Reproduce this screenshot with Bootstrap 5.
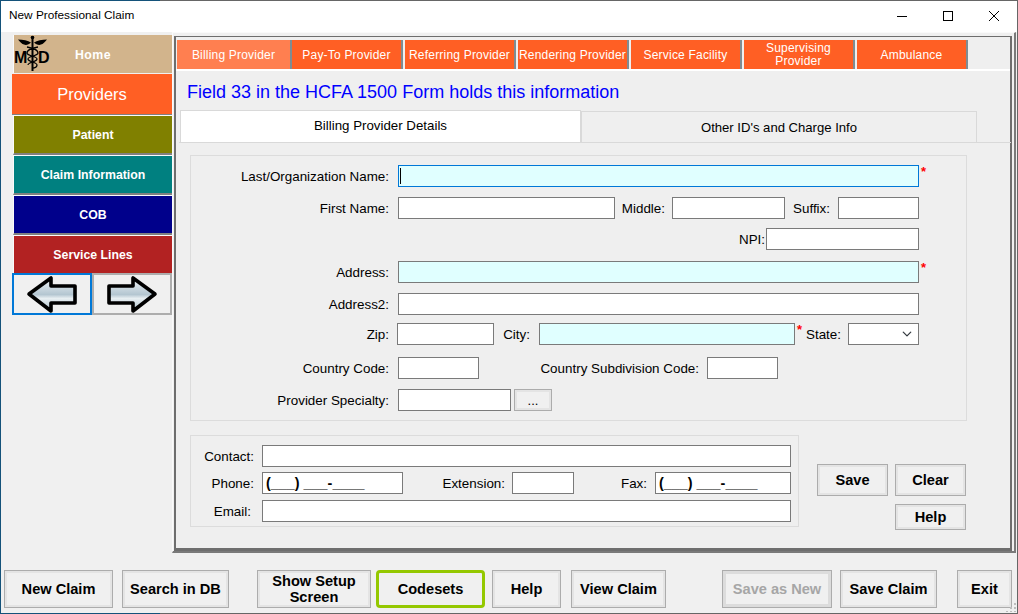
<!DOCTYPE html>
<html lang="en">
<head>
<meta charset="UTF-8">
<title>New Professional Claim</title>
<link href="https://cdn.jsdelivr.net/npm/bootstrap@5.3.0/dist/css/bootstrap.min.css" rel="stylesheet">
<style>
html, body { margin: 0; height: 100%; overflow: hidden; background: #f0f0f0; }
body { font-family: "Liberation Sans", Arial, sans-serif; font-size: 13.4px; color: #000; }
.app-window { position: relative; width: 1018px; height: 614px; border: 1px solid; border-image: linear-gradient(to right, #14527a 160px, #666 160px) 1; background: #f0f0f0; }
.title-bar { height: 31px; background: #fff; padding: 0 0 2px 8px; font-size: 11.8px; }
.win-btn { width: 46px; height: 29px; }
.main-row { height: 521px; }

/* left menu */
.side-menu { width: 171px; padding: 3px 0 0 11px; }
.side-btn { display: flex; align-items: center; justify-content: center; margin-left: 1px; padding-top: 1px; color: #fff; font-weight: 700; font-size: 12.3px; height: 40px; border-top: 1px solid #fafafa; border-bottom: 2px solid #808080; border-left: 1px solid #fafafa; }
.side-home { background: #d2b48c; height: 38px; margin-bottom: 1px; border: 0; border-left: 1px solid #fafafa; position: relative; padding-top: 2px; letter-spacing: .5px; }
.side-prov { background: #ff5f24; margin-left: 0; height: 41px; font-weight: 400; font-size: 16.5px; padding-top: 0; border: 0; border-bottom: 1px solid #808080; }
.side-patient { background: #808000; }
.side-claim { background: #008080; }
.side-cob { background: #00008b; }
.side-lines { background: #b22222; height: 38px; border-bottom: 0; }
.md-logo { position: absolute; left: 0; top: 0; }
.md-letter { font-family: "Liberation Sans", Arial, sans-serif; font-weight: 700; font-size: 16px; }
.arrow-btn { width: 80px; height: 42px; background: #f0f0f0; border: 2px solid #adadad; padding: 0; }
.arrow-on { border-color: #0078d7; }

/* right frame */
.outer-frame { width: 844px; height: 521px; padding: 3px 0 0 1px; border-right: 2px solid #7a7a7a; border-bottom: 2px solid #7a7a7a; border-top: 1px solid #fafafa; border-left: 1px solid #fafafa; }
.claim-panel { height: 515px; width: 838px; border: 2px solid #6e6e6e; border-top-width: 1px; background: #efefef; border-bottom-width: 3px; }
.top-tabs { height: 29px; margin: 3px 0 0 1px; }
.top-tab { width: 111px; margin-right: 2px; padding-top: 1px; font-size: 12px; line-height: 13px; letter-spacing: .2px; color: #fff; background: #ff5f24; border-right: 2px solid #7f8c92; text-align: center; display: flex; align-items: center; justify-content: center; }
.top-tab-on { background: #ff7f50; width: 115px; margin-right: 0; }
.strip-line { height: 2px; background: #fff; }
.form-title { color: #0000ff; font-size: 18px; line-height: 43px; height: 39px; padding-left: 11px; }
.inner-tabs { margin-left: 4px; width: 797px; height: 32px; }
.inner-tab { height: 32px; border: 1px solid #d9d9d9; border-bottom: 0; line-height: 29px; text-align: center; font-size: 13.3px; }
.inner-on { width: 401px; background: #fff; }
.inner-off { width: 396px; margin-top: 1px; height: 31px; line-height: 31px; font-size: 13.1px; }
.tab-body { border-top: 1px solid #d9d9d9; margin-left: 3px; width: 832px; }

/* form */
.group-one { margin: 12px 0 0 14px; width: 777px; height: 266px; border: 1px solid #dcdcdc; padding-top: 9px; }
.group-two { margin: 14px 0 0 14px; width: 609px; height: 92px; border: 1px solid #dcdcdc; padding-top: 9px; }
.f-row { height: 22px; display: flex; align-items: center; }
.f-row > span { padding-top: 2px; }
.gap5 { margin-top: 5px; } .gap6 { margin-top: 6px; } .gap8 { margin-top: 8px; } .gap9 { margin-top: 9px; } .gap10 { margin-top: 10px; } .gap11 { margin-top: 11px; } .gap12 { margin-top: 12px; }
.lab { width: 198px; text-align: right; white-space: nowrap; flex: none; }
.lab2 { width: 63px; text-align: right; white-space: nowrap; flex: none; }
.lab-email { padding-right: 3px; }
.to-end { text-align: right; white-space: nowrap; flex: none; }
.form-control.fld, .form-select.fld { height: 22px; min-height: 22px; border: 1px solid #7a7a7a; border-radius: 0; padding: 0 4px; background-color: #fff; box-shadow: none; font-size: 14px; font-family: inherit; flex: none; }
.form-control.req { background-color: #e0ffff; }
.form-control.caret-on { border-color: #0078d7; background-image: linear-gradient(#000, #000); background-repeat: no-repeat; background-position: 1px center; background-size: 1px 16px; }
.form-control.phone { font-weight: 700; font-size: 14.4px; padding: 0 3px; color: #000; }
.form-select.fld { width: 71px; background-position: right 4px center; background-size: 14px 10px; }
.f-row > .star { color: #f00; font-size: 13px; font-weight: 700; line-height: 10px; align-self: flex-start; margin-left: 2px; padding-top: 2px; width: 6px; flex: none; }
.w25 { width: 25px; } .w36 { width: 36px; } .w38 { width: 38px; } .w44 { width: 44px; } .w45 { width: 45px; } .w62 { width: 62px; } .w71 { width: 71px; } .w73 { width: 73px; } .w81 { width: 81px; } .w97 { width: 97px; } .w102 { width: 102px; } .w113 { width: 113px; } .w136 { width: 136px; } .w141 { width: 141px; } .w153 { width: 153px; } .w217 { width: 217px; } .w220 { width: 220px; } .w256 { width: 256px; } .w521 { width: 521px; } .w529 { width: 529px; }
.ms2px { margin-left: 2px; } .ms3px { margin-left: 3px; } .ms6px { margin-left: 6px; } .ms7px { margin-left: 7px; } .ms8px { margin-left: 8px; } .ms9px { margin-left: 9px; } .ms548px { margin-left: 548px; }

/* buttons */
.btn.win { --bs-btn-padding-x: 0; --bs-btn-padding-y: 0; background: #f0f0f0; border: 1px solid #acacac; box-shadow: inset 0 0 0 2px #e4e4e4; border-radius: 0; color: #000; font-weight: 700; font-size: 14.6px; line-height: 16px; font-family: inherit; display: flex; align-items: center; justify-content: center; flex: none; }
.btn.dots { width: 38px; height: 22px; padding-top: 2px; font-weight: 400; font-size: 13px; line-height: 14px; }
.side-btns { margin-left: 18px; width: 149px; padding-top: 43px; }
.act-row { gap: 7px; }
.btn.small-act { width: 71px; height: 32px; }
.btn.help-act { width: 71px; height: 26px; margin: 8px 0 0 78px; }
.bottom-bar { height: 60px; padding: 17px 0 0 3px; }
.btn.bar { height: 38px; }
.btn.green { border: 3px solid #94c800; border-radius: 4px; box-shadow: none; }
.btn.off { color: #a6a6a6; box-shadow: inset 0 0 0 3px #dcdcdc; }
.b109 { width: 109px; } .b107 { width: 107px; } .b114 { width: 114px; } .b69 { width: 69px; } .b95 { width: 95px; } .b110 { width: 110px; } .b97 { width: 97px; } .b55 { width: 55px; }
.bm9 { margin-left: 9px; } .bm28 { margin-left: 28px; } .bm5 { margin-left: 5px; } .bm7 { margin-left: 7px; } .bm10 { margin-left: 10px; } .bm56 { margin-left: 56px; } .bm8 { margin-left: 8px; } .bm20 { margin-left: 20px; }
.grip { position: absolute; right: 1px; bottom: 1px; }
</style>
</head>
<body>
<div class="app-window">
  <div class="title-bar d-flex align-items-center justify-content-between">
    <span>New Professional Claim</span>
    <div class="d-flex">
      <div class="win-btn d-flex align-items-center justify-content-center"><svg width="12" height="12"><path d="M1 6.5h10" stroke="#000" fill="none"/></svg></div>
      <div class="win-btn d-flex align-items-center justify-content-center"><svg width="12" height="12"><rect x="1.5" y="1.5" width="9" height="9" stroke="#000" fill="none"/></svg></div>
      <div class="win-btn d-flex align-items-center justify-content-center"><svg width="12" height="12"><path d="M1 1l10 10M11 1L1 11" stroke="#000" fill="none"/></svg></div>
    </div>
  </div>

  <div class="main-row d-flex">
    <div class="side-menu">
      <div class="side-btn side-home">
        <svg class="md-logo" width="38" height="38" viewBox="0 0 38 38">
          <path d="M18.5 1v35" stroke="#000" stroke-width="2" fill="none"/>
          <circle cx="18.5" cy="2.5" r="1.8" fill="#000"/>
          <path d="M4 4.5c5 0 10 1 13 3-2 2-5 3-7 2-2 0-4-3-6-5zM33 4.5c-5 0-10 1-13 3 2 2 5 3 7 2 2 0 4-3 6-5z" fill="#000"/>
          <path d="M13 12c6 1 11 3 11 6s-10 3-10 6 9 3 9 6-3 3-5 3M24 12c-6 1-11 3-11 6s10 3 10 6-9 3-9 6" stroke="#000" stroke-width="1.3" fill="none"/>
          <text class="md-letter" x="0" y="28">M</text>
          <text class="md-letter" x="24" y="28">D</text>
        </svg>
        <span>Home</span>
      </div>
      <div class="side-btn side-prov">Providers</div>
      <div class="side-btn side-patient">Patient</div>
      <div class="side-btn side-claim">Claim Information</div>
      <div class="side-btn side-cob">COB</div>
      <div class="side-btn side-lines">Service Lines</div>
      <div class="d-flex">
        <button class="arrow-btn arrow-on d-flex align-items-center justify-content-center" type="button" aria-label="Back">
          <svg width="52" height="38" viewBox="0 0 52 38"><defs><linearGradient id="gl" x1="0" y1="0" x2="0" y2="1"><stop offset="0" stop-color="#eef4f7"/><stop offset=".5" stop-color="#b4c6d1"/><stop offset=".62" stop-color="#e8eff2"/><stop offset="1" stop-color="#a9bcc8"/></linearGradient></defs><path d="M3 19L25 3v8h24v17H25v8z" fill="url(#gl)" stroke="#000" stroke-width="3.6" stroke-linejoin="round"/></svg>
        </button>
        <button class="arrow-btn d-flex align-items-center justify-content-center" type="button" aria-label="Forward">
          <svg width="52" height="38" viewBox="0 0 52 38"><path d="M49 19L27 3v8H3v17h24v8z" fill="url(#gl)" stroke="#000" stroke-width="3.6" stroke-linejoin="round"/></svg>
        </button>
      </div>
    </div>

    <div class="outer-frame">
      <div class="claim-panel">
        <div class="top-tabs d-flex">
          <div class="top-tab top-tab-on">Billing Provider</div>
          <div class="top-tab">Pay-To Provider</div>
          <div class="top-tab">Referring Provider</div>
          <div class="top-tab">Rendering Provider</div>
          <div class="top-tab">Service Facility</div>
          <div class="top-tab">Supervising<br>Provider</div>
          <div class="top-tab">Ambulance</div>
        </div>
        <div class="strip-line"></div>
        <div class="form-title">Field 33 in the HCFA 1500 Form holds this information</div>
        <div class="inner-tabs d-flex">
          <div class="inner-tab inner-on">Billing Provider Details</div>
          <div class="inner-tab inner-off">Other ID's and Charge Info</div>
        </div>
        <div class="tab-body"></div>

        <div class="group-one">
          <div class="f-row">
            <span class="lab">Last/Organization Name:</span>
            <input class="form-control fld req caret-on w521 ms9px" type="text">
            <span class="star">*</span>
          </div>
          <div class="f-row gap10">
            <span class="lab">First Name:</span>
            <input class="form-control fld w217 ms9px" type="text">
            <span class="to-end w44 ms6px">Middle:</span>
            <input class="form-control fld w113 ms7px" type="text">
            <span class="to-end w45">Suffix:</span>
            <input class="form-control fld w81 ms8px" type="text">
          </div>
          <div class="f-row gap9">
            <span class="to-end w25 ms548px">NPI:</span>
            <input class="form-control fld w153 ms2px" type="text">
          </div>
          <div class="f-row gap11">
            <span class="lab">Address:</span>
            <input class="form-control fld req w521 ms9px" type="text">
            <span class="star">*</span>
          </div>
          <div class="f-row gap10">
            <span class="lab">Address2:</span>
            <input class="form-control fld w521 ms9px" type="text">
          </div>
          <div class="f-row gap8">
            <span class="lab">Zip:</span>
            <input class="form-control fld w97 ms8px" type="text">
            <span class="to-end w36">City:</span>
            <input class="form-control fld req w256 ms9px" type="text">
            <span class="star">*</span>
            <span class="to-end w38">State:</span>
            <select class="form-select fld ms7px"><option></option></select>
          </div>
          <div class="f-row gap12">
            <span class="lab">Country Code:</span>
            <input class="form-control fld w81 ms9px" type="text">
            <span class="to-end w220">Country Subdivision Code:</span>
            <input class="form-control fld w71 ms8px" type="text">
          </div>
          <div class="f-row gap10">
            <span class="lab">Provider Specialty:</span>
            <input class="form-control fld w113 ms9px" type="text">
            <button class="btn win dots ms3px" type="button">...</button>
          </div>
        </div>

        <div class="d-flex">
          <div class="group-two">
            <div class="f-row">
              <span class="lab2">Contact:</span>
              <input class="form-control fld w529 ms8px" type="text">
            </div>
            <div class="f-row gap5">
              <span class="lab2">Phone:</span>
              <input class="form-control fld phone w141 ms8px" type="text" value="(___) ___-____">
              <span class="to-end w102">Extension:</span>
              <input class="form-control fld w62 ms7px" type="text">
              <span class="to-end w73">Fax:</span>
              <input class="form-control fld phone w136 ms8px" type="text" value="(___) ___-____">
            </div>
            <div class="f-row gap6">
              <span class="lab2 lab-email">Email:</span>
              <input class="form-control fld w529 ms8px" type="text">
            </div>
          </div>
          <div class="side-btns">
            <div class="d-flex act-row">
              <button class="btn win small-act" type="button">Save</button>
              <button class="btn win small-act" type="button">Clear</button>
            </div>
            <button class="btn win help-act" type="button">Help</button>
          </div>
        </div>
      </div>
    </div>
  </div>

  <div class="bottom-bar d-flex">
    <button class="btn win bar b109" type="button">New Claim</button>
    <button class="btn win bar b107 bm9" type="button">Search in DB</button>
    <button class="btn win bar b114 bm28" type="button">Show Setup<br>Screen</button>
    <button class="btn win bar green b109 bm5" type="button">Codesets</button>
    <button class="btn win bar b69 bm7" type="button">Help</button>
    <button class="btn win bar b95 bm10" type="button">View Claim</button>
    <button class="btn win bar off b110 bm56" type="button">Save as New</button>
    <button class="btn win bar b97 bm8" type="button">Save Claim</button>
    <button class="btn win bar b55 bm20" type="button">Exit</button>
  </div>
  <svg class="grip" width="10" height="10"><path d="M8 1h2v2H8zM4 5h2v2H4zM8 5h2v2H8zM0 9h2v1H0zM4 9h2v1H4zM8 9h2v1H8z" fill="#bdbdbd"/></svg>
</div>
<script src="https://cdn.jsdelivr.net/npm/bootstrap@5.3.0/dist/js/bootstrap.bundle.min.js"></script>
</body>
</html>
